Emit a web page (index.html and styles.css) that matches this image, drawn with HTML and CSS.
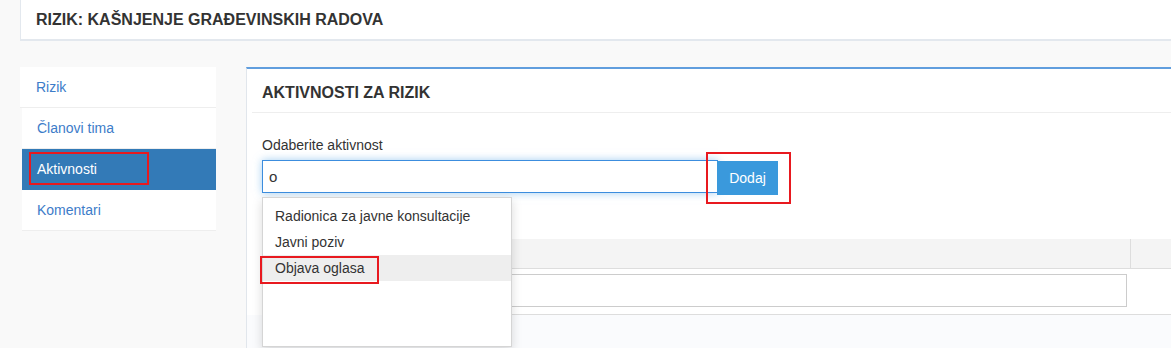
FILE: index.html
```html
<!DOCTYPE html>
<html lang="hr">
<head>
    <meta charset="UTF-8">
    <meta name="viewport" content="width=device-width, initial-scale=1.0">
    <title>Rizik - Aktivnosti</title>
    <link rel="stylesheet" href="styles.css">
</head>
<body>
    <div class="page-header">
        <h1>RIZIK: KAŠNJENJE GRAĐEVINSKIH RADOVA</h1>
    </div>
    <div class="layout">
        <nav class="side-nav">
            <a href="#">Rizik</a>
            <a href="#">Članovi tima</a>
            <a href="#" class="active">Aktivnosti<span class="mark mark-nav"></span></a>
            <a href="#">Komentari</a>
        </nav>
        <div class="panel">
            <h2 class="panel-heading">AKTIVNOSTI ZA RIZIK</h2>
            <div class="panel-body">
                <label class="label">Odaberite aktivnost</label>
                <div class="add-group">
                    <div class="input focus">o</div>
                    <button class="btn">Dodaj<span class="mark mark-btn"></span></button>
                    <ul class="dropdown">
                        <li>Radionica za javne konsultacije</li>
                        <li>Javni poziv</li>
                        <li class="hover">Objava oglasa<span class="mark mark-item"></span></li>
                    </ul>
                </div>
                <table class="grid">
                    <thead>
                        <tr>
                            <th class="col-main"></th>
                            <th></th>
                        </tr>
                    </thead>
                    <tbody>
                        <tr>
                            <td class="col-main"><div class="input"></div></td>
                            <td></td>
                        </tr>
                    </tbody>
                </table>
            </div>
            <div class="panel-footer"></div>
        </div>
    </div>
</body>
</html>
```

FILE: styles.css
```css
body {
    font-family: 'Liberation Sans', Arial, sans-serif;
    font-size: 14px;
    color: #333;
    background: #f9f9f9;
    margin: 0;
    padding: 0;
    overflow: hidden;
}
.page-header {
    margin-left: 20px;
    height: 39px;
    padding-left: 15px;
    background: #fff;
    border-left: 1px solid #e3e8ee;
    border-bottom: 2px solid #e3e8ee;
    display: flex;
    align-items: center;
}
h1 {
    margin: 0;
    font-size: 16px;
    font-weight: bold;
    color: #333;
}
.layout {
    display: flex;
    align-items: flex-start;
    gap: 30px;
    margin-top: 26px;
    padding-left: 20px;
}
.side-nav {
    width: 196px;
    flex: none;
}
.side-nav a {
    position: relative;
    display: block;
    margin-left: 2px;
    padding: 10px 15px;
    line-height: 20px;
    background: #fff;
    border-bottom: 1px solid #eee;
    color: #3d7cc9;
    text-decoration: none;
}
.side-nav a:first-child {
    margin-left: 0;
    padding-left: 16px;
}
.side-nav a.active {
    background: #337ab7;
    color: #fff;
    border-bottom-color: #337ab7;
}
.panel {
    flex: 1;
    min-width: 0;
    height: 280px;
    background: #fff;
    border-top: 2px solid #619ede;
    border-left: 1px solid #e1e6ec;
    display: flex;
    flex-direction: column;
}
.panel-heading {
    margin: 0 0 0 5px;
    padding: 14px 10px 9px;
    line-height: 20px;
    font-size: 16px;
    font-weight: bold;
    color: #333;
    border-bottom: 1px solid #eee;
}
.panel-body {
    padding: 0 0 0 15px;
}
.label {
    display: block;
    margin-top: 22px;
    margin-bottom: 5px;
    line-height: 20px;
}
.add-group {
    position: relative;
    display: flex;
    align-items: flex-start;
}
.input {
    box-sizing: border-box;
    height: 33px;
    width: 456px;
    padding: 0 6px;
    line-height: 31px;
    font-size: 15px;
    background: #fff;
    border: 1px solid #ccc;
}
.input.focus {
    border-color: #3c8dde;
    box-shadow: 0 0 8px rgba(102, 175, 233, 0.6);
}
.btn {
    position: relative;
    width: 61px;
    height: 34px;
    margin: 1px 0 0 -1px;
    padding: 0;
    background: #3a99dc;
    color: #fff;
    border: none;
    font-family: inherit;
    font-size: 14px;
}
.dropdown {
    position: absolute;
    left: 0;
    top: 37px;
    box-sizing: border-box;
    width: 250px;
    height: 150px;
    margin: 0;
    padding: 5px 0;
    list-style: none;
    background: #fff;
    border: 1px solid #d5d5d5;
    box-shadow: 0 4px 10px rgba(0, 0, 0, 0.15);
    z-index: 5;
}
.dropdown li {
    position: relative;
    padding: 3px 12px;
    line-height: 20px;
    color: #333;
}
.dropdown li.hover {
    background: #eee;
}
.grid {
    width: 100%;
    margin-top: 44px;
    border-collapse: collapse;
}
.grid th {
    height: 29px;
    padding: 0;
    background: #f4f4f4;
    border-bottom: 1px solid #ddd;
}
.grid th + th {
    border-left: 1px solid #ddd;
}
.grid td {
    padding: 5px 0 7px;
    border-bottom: 1px solid #ddd;
}
.grid .col-main {
    width: 868px;
}
.grid td .input {
    width: 865px;
}
.panel-footer {
    flex: 1;
    background: #fafbfd;
}
.mark {
    position: absolute;
    box-sizing: border-box;
    border: 2px solid #e8191f;
}
.mark-nav {
    left: 7px;
    top: 3px;
    width: 120px;
    height: 33px;
}
.mark-btn {
    left: -11px;
    top: -9px;
    width: 85px;
    height: 52px;
}
.mark-item {
    left: -3px;
    top: 1px;
    width: 119px;
    height: 28px;
}
```
